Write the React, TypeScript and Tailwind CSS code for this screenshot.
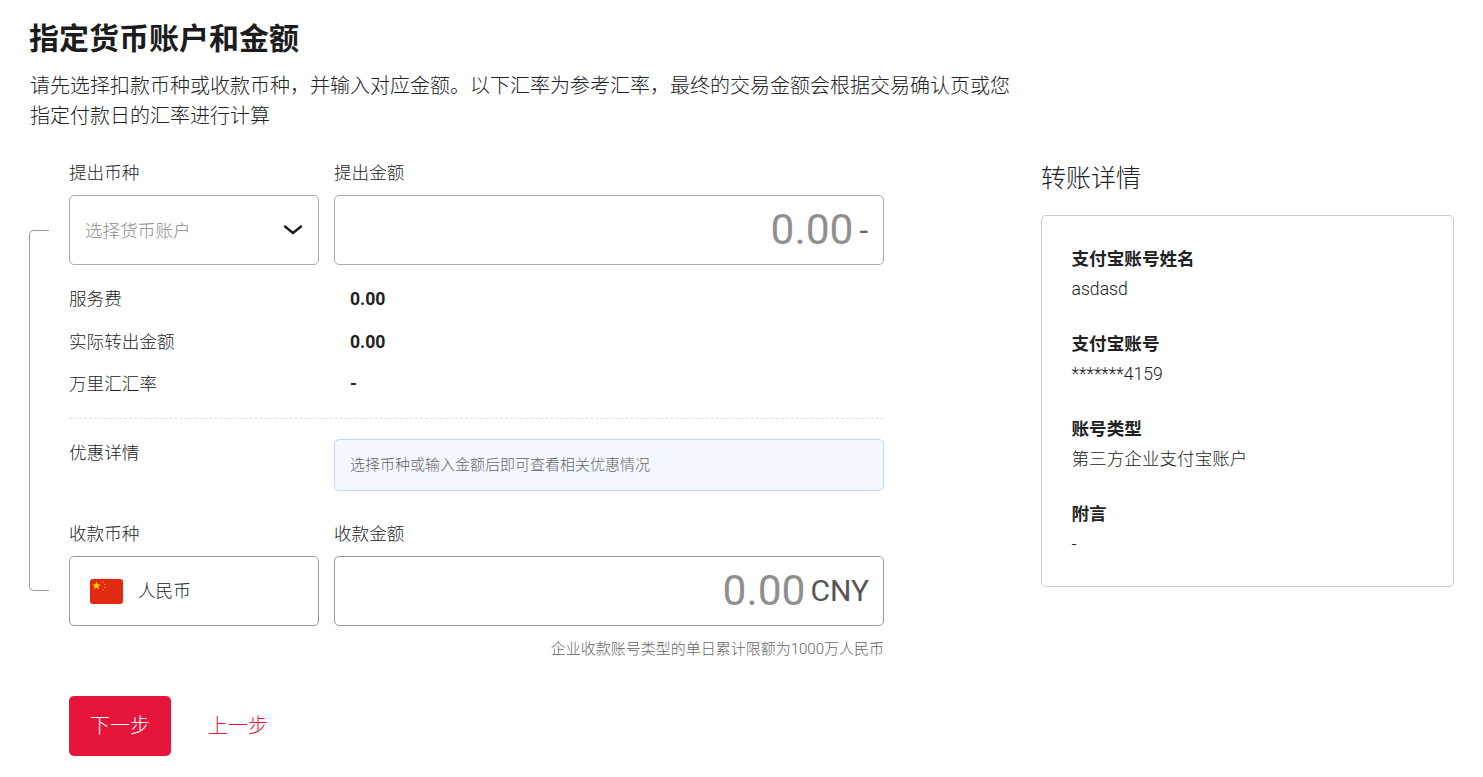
const font = '[font-family:Roboto,"Noto_Sans_CJK_SC",sans-serif]';

function Detail({ label, value }: { label: string; value: string }) {
  return (
    <div className="h-[85px]">
      <div className="h-[30px] text-[17.6px] leading-[30px] font-bold text-[#222]">{label}</div>
      <div className="h-[30px] text-[17.6px] leading-[30px] font-light text-[#222]">{value}</div>
    </div>
  );
}

function Fee({ label, value }: { label: string; value: string }) {
  return (
    <div className="flex h-[42.5px] items-center text-[17.6px] text-[#222]">
      <div className="w-[281px] font-light">{label}</div>
      <div className="font-bold">{value}</div>
    </div>
  );
}

function Flag() {
  return (
    <svg width="33" height="25" viewBox="0 0 33 25" className="mt-[1px] shrink-0">
      <rect width="33" height="25" rx="3" fill="#E02B12" />
      <polygon points="6.5,2.5 7.6,5.4 10.6,5.5 8.2,7.4 9.1,10.3 6.5,8.6 3.9,10.3 4.8,7.4 2.4,5.5 5.4,5.4" fill="#FFDE00" />
      <circle cx="13" cy="3" r="0.6" fill="#FFDE00" />
      <circle cx="15" cy="5.5" r="0.6" fill="#FFDE00" />
      <circle cx="15" cy="8.5" r="0.6" fill="#FFDE00" />
      <circle cx="13" cy="11" r="0.6" fill="#FFDE00" />
    </svg>
  );
}

export default function App() {
  return (
    <div className={`${font} min-h-[777px] bg-white pl-[29px] pt-[19px] text-[#222] overflow-hidden`}>
      <h1 className="h-[40px] text-[30px] leading-[40px] font-bold text-[#1c1c1c]">指定货币账户和金额</h1>
      <p className="ml-[1px] mt-[12px] w-[990px] text-[20px] leading-[30px] font-light text-[#222]">
        请先选择扣款币种或收款币种，并输入对应金额。以下汇率为参考汇率，最终的交易金额会根据交易确认页或您指定付款日的汇率进行计算
      </p>
      <div className="mt-[28px] flex">
        <div className="mt-[71px] mr-[20px] h-[361px] w-[20px] shrink-0 rounded-l-[5px] border-y border-l border-[#999]" />
        <div className="w-[815px] shrink-0">
          <div className="grid grid-cols-[250px_550px] gap-x-[15px] font-light">
            <div className="h-[36px] text-[17.6px] leading-[28px]">提出币种</div>
            <div className="h-[36px] text-[17.6px] leading-[28px]">提出金额</div>
            <div className="flex h-[70px] items-center justify-between rounded-[5px] border border-[#aaa] pl-[15px] pr-[15px]">
              <span className="mt-[2px] text-[17.6px] text-[#8c8c8c]">选择货币账户</span>
              <svg width="20" height="12" viewBox="0 0 20 12" fill="none">
                <path d="M2 2.5 L10 9 L18 2.5" stroke="#1c1c1c" strokeWidth="2.4" strokeLinecap="round" strokeLinejoin="round" />
              </svg>
            </div>
            <div className="flex h-[70px] items-center justify-end rounded-[5px] border border-[#aaa] pr-[15px]">
              <span className="text-[42.5px] font-normal text-[#8f8f8f]">0.00</span>
              <span className="ml-[6px] mt-[3px] text-[31px] font-normal text-[#666]">-</span>
            </div>
          </div>
          <div className="mt-[13px]">
            <Fee label="服务费" value="0.00" />
            <Fee label="实际转出金额" value="0.00" />
            <Fee label="万里汇汇率" value="-" />
          </div>
          <div className="mt-[12px] border-t border-dashed border-[#e2e2e2]" />
          <div className="mt-[20px] grid grid-cols-[250px_550px] gap-x-[15px]">
            <div className="text-[17.6px] leading-[28px] font-light">优惠详情</div>
            <div className="flex h-[52px] items-center rounded-[5px] border border-[#c5d5f8] bg-[#f3f7fe] pl-[15px] text-[15px] font-light text-[#666]">
              <span className="mt-[2px]">选择币种或输入金额后即可查看相关优惠情况</span>
            </div>
          </div>
          <div className="mt-[29px] grid grid-cols-[250px_550px] gap-x-[15px] font-light">
            <div className="h-[36px] text-[17.6px] leading-[28px]">收款币种</div>
            <div className="h-[36px] text-[17.6px] leading-[28px]">收款金额</div>
            <div className="flex h-[70px] items-center rounded-[5px] border border-[#999] pl-[20px]">
              <Flag />
              <span className="ml-[15px] mt-[2px] text-[17.6px] text-[#222]">人民币</span>
            </div>
            <div className="flex h-[70px] items-center justify-end rounded-[5px] border border-[#999] pr-[14px]">
              <span className="text-[42.5px] font-normal text-[#8f8f8f]">0.00</span>
              <span className="ml-[5px] text-[30px] font-normal text-[#555]">CNY</span>
            </div>
          </div>
          <div className="mt-[13px] h-[20px] text-right text-[15px] leading-[20px] font-light text-[#666]">
            企业收款账号类型的单日累计限额为1000万人民币
          </div>
          <div className="mt-[37px] flex items-center font-light">
            <button className="h-[60px] w-[102px] rounded-[5px] bg-[#e7153b] text-[20px] text-white">下一步</button>
            <button className="ml-[37px] text-[20px] text-[#e7153b]">上一步</button>
          </div>
        </div>
        <div className="ml-[157px] w-[413px] shrink-0">
          <div className="h-[56px] text-[25px] leading-[40px] font-light text-[#222]">转账详情</div>
          <div className="h-[372px] rounded-[5px] border border-[#ccc] pl-[29.5px] pt-[28px]">
            <Detail label="支付宝账号姓名" value="asdasd" />
            <Detail label="支付宝账号" value="*******4159" />
            <Detail label="账号类型" value="第三方企业支付宝账户" />
            <Detail label="附言" value="-" />
          </div>
        </div>
      </div>
    </div>
  );
}
